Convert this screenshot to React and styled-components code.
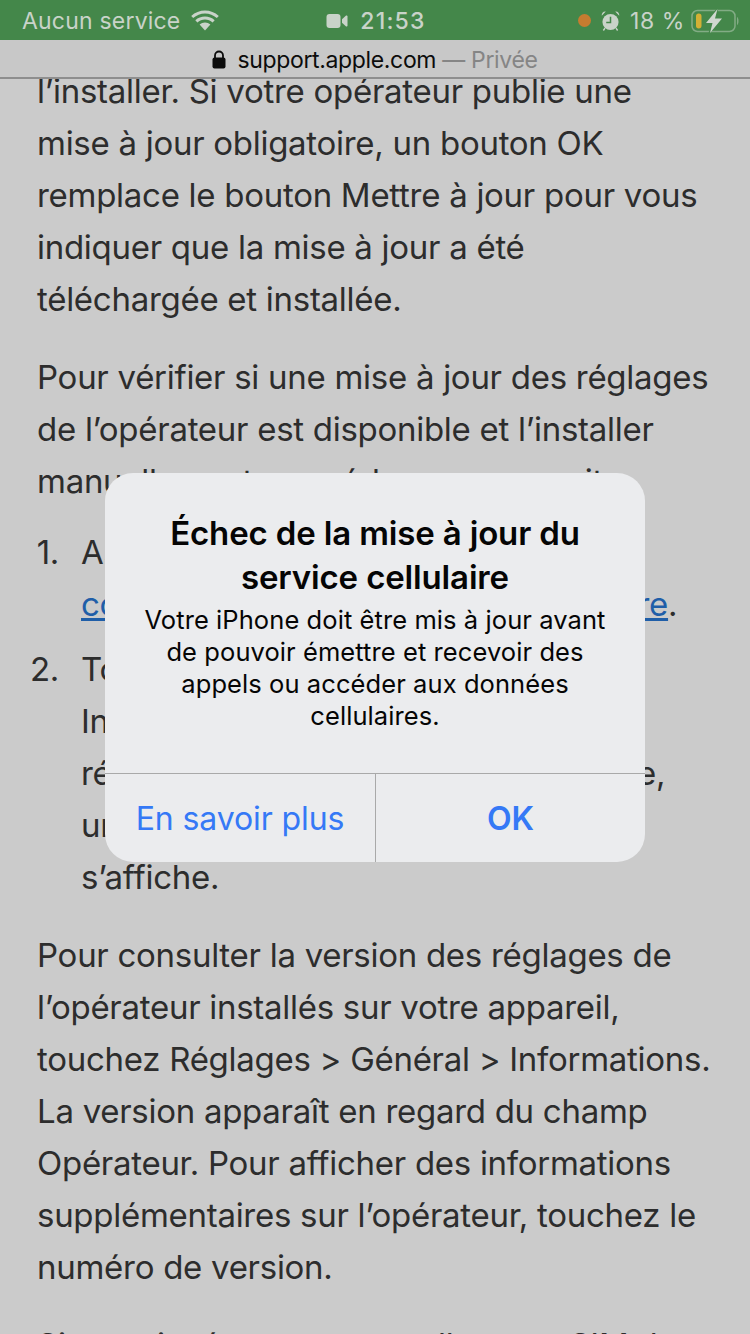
import React from 'react';
import styled, { createGlobalStyle } from 'styled-components';

const GlobalStyle = createGlobalStyle`
  html, body { margin: 0; padding: 0; background: #cbcbcb; }
  * { box-sizing: border-box; }
`;

const Phone = styled.div`
  position: relative;
  width: 750px;
  height: 1334px;
  overflow: hidden;
  display: flex;
  flex-direction: column;
  background: #cbcbcb;
  font-family: Inter, "Liberation Sans", sans-serif;
`;

const StatusBar = styled.div`
  height: 40px;
  flex: none;
  display: grid;
  grid-template-columns: 1fr auto 1fr;
  align-items: center;
  padding: 1px 20px 0 22px;
  background: #44874a;
  color: #c9d3c9;
  font-size: 23px;
  letter-spacing: 0.2px;
`;

const StatusSide = styled.div`
  display: flex;
  align-items: center;
  gap: ${({ $gap }) => $gap || '8px'};
  justify-content: ${({ $end }) => ($end ? 'flex-end' : 'flex-start')};
  margin-right: ${({ $end }) => ($end ? '-9px' : '0')};
`;

const Clock = styled.span`
  font-weight: 500;
  letter-spacing: 1.2px;
`;

const RecordDot = styled.span`
  width: 13px;
  height: 13px;
  border-radius: 50%;
  background: #c67c30;
`;

const Percent = styled.span`
  margin-right: -4px;
  letter-spacing: 0.6px;
`;

const AddressBar = styled.div`
  height: 39px;
  flex: none;
  position: relative;
  z-index: 1;
  display: flex;
  align-items: center;
  justify-content: center;
  gap: 11px;
  padding-top: 2px;
  background: #c8c8c8;
  border-bottom: 2px solid #8e8e8e;
  font-size: 23px;
  letter-spacing: -0.35px;
  color: #0c0c0c;
`;

const Private = styled.span`
  color: #858585;
`;

const Article = styled.main`
  flex: 1;
  overflow: hidden;
  margin-top: -14px;
  padding: 0 37px;
  color: #2d2d2d;
  font-size: 33px;
  line-height: 52px;
  letter-spacing: -0.28px;
`;

const Para = styled.p`
  margin: 0 0 ${({ $gap }) => $gap || '26px'};
  white-space: nowrap;
`;

const Steps = styled.ol`
  margin: 0 0 26px -9px;
  padding: 0;
  list-style: none;
  white-space: nowrap;
`;

const Step = styled.li`
  display: flex;
  & + & { margin-top: 13px; }
`;

const StepNum = styled.span`
  width: 53px;
  flex: none;
  padding-right: 22px;
  text-align: right;
`;

const TextLink = styled.a`
  color: #1f5ea8;
  text-decoration: underline;
`;

const Dialog = styled.div`
  position: absolute;
  left: 105px;
  top: 473px;
  width: 540px;
  height: 389px;
  border-radius: 28px;
  overflow: hidden;
  display: flex;
  flex-direction: column;
  background: #ebecee;
  text-align: center;
`;

const DialogBody = styled.div`
  flex: 1;
  padding: 38px 24px 0;
  color: #050505;
`;

const DialogTitle = styled.h2`
  margin: 0 0 5px;
  font-size: 33px;
  line-height: 44px;
  font-weight: 600;
  letter-spacing: -0.15px;
`;

const DialogText = styled.p`
  margin: 0;
  font-size: 25.5px;
  line-height: 32px;
  letter-spacing: 0.08px;
`;

const DialogActions = styled.div`
  height: 89px;
  flex: none;
  display: grid;
  grid-template-columns: 270px 270px;
  border-top: 1px solid #a9a9a9;
`;

const DialogButton = styled.button`
  border: 0;
  padding: 0;
  background: none;
  font-family: inherit;
  font-size: 32px;
  letter-spacing: -0.1px;
  font-weight: ${({ $primary }) => ($primary ? 600 : 400)};
  color: #3579f6;
  & + & { border-left: 1px solid #a9a9a9; }
`;

const WifiIcon = () => (
  <svg width="30" height="22" viewBox="0 0 30 22" fill="#c9d3c9">
    <path d="M15 3.500c4.400 0 8.600 1.700 11.800 4.600l2-2.200C25 2.400 20.100.5 15 .5S5 2.400 1.200 5.900l2 2.200C6.400 5.200 10.600 3.500 15 3.500z" />
    <path d="M15 9.500c2.800 0 5.500 1 7.600 2.900l2.100-2.200C22 7.800 18.600 6.500 15 6.500s-7 1.300-9.700 3.700l2.100 2.200c2.100-1.900 4.800-2.900 7.600-2.900z" />
    <path d="M15 12.500c-2 0-3.900.7-5.400 2L15 20.500l5.400-6c-1.500-1.300-3.400-2-5.400-2z" />
  </svg>
);

const CameraIcon = () => (
  <svg width="22" height="16" viewBox="0 0 21 16" fill="#c9d3c9">
    <rect x="0" y="1" width="14" height="14" rx="3" />
    <path d="M15.500 6.200 19.300 2.800c.6-.5 1.700-.2 1.700.8v8.800c0 1-1.100 1.300-1.700.8l-3.800-3.400z" />
  </svg>
);

const AlarmIcon = () => (
  <svg width="19" height="22" viewBox="0 0 20 22">
    <circle cx="10" cy="12" r="8.500" fill="#c9d3c9" />
    <path d="M10 6.500V12.500H5.500" fill="none" stroke="#44874a" strokeWidth="1.600" />
    <path d="M.8 5.500C.4 2.800 2.500.6 5 1zM19.200 5.500C19.600 2.800 17.500.6 15 1z" fill="#c9d3c9" />
    <path d="M4.200 18.500 2.500 21M15.800 18.500 17.500 21" stroke="#c9d3c9" strokeWidth="1.500" />
  </svg>
);

const BatteryIcon = () => (
  <svg width="48" height="24" viewBox="0 0 48 24">
    <rect x="1" y="1.500" width="43" height="21" rx="5.500" fill="none" stroke="#82ac85" strokeWidth="1.500" />
    <path d="M46 8c1 .5 1.500 2 1.500 4s-.5 3.500-1.500 4z" fill="#82ac85" />
    <rect x="5" y="4.500" width="5.500" height="15" rx="2.700" fill="#d3b035" />
    <path d="M27 -2 13 15h7l-3 11 16-18h-7z" fill="#44874a" />
    <path d="M26.500 0 15 14h6.500L19 24 31 9.500h-7z" fill="#cfd8cf" />
  </svg>
);

const LockIcon = () => (
  <svg width="14" height="19" viewBox="0 0 14 19" fill="#0c0c0c">
    <path d="M3 8V5.500a4 4 0 0 1 8 0V8" fill="none" stroke="#0c0c0c" strokeWidth="1.800" />
    <rect x="0.500" y="7.500" width="13" height="11" rx="2" />
  </svg>
);

export default function App() {
  return (
    <Phone>
      <GlobalStyle />
      <StatusBar>
        <StatusSide $gap="10px">
          Aucun service
          <WifiIcon />
        </StatusSide>
        <StatusSide $gap="12px">
          <CameraIcon />
          <Clock>21:53</Clock>
        </StatusSide>
        <StatusSide $end $gap="10px">
          <RecordDot />
          <AlarmIcon />
          <Percent>18 %</Percent>
          <BatteryIcon />
        </StatusSide>
      </StatusBar>
      <AddressBar>
        <LockIcon />
        <span>
          support.apple.com <Private>— Privée</Private>
        </span>
      </AddressBar>
      <Article>
        <Para>
          l’installer. Si votre opérateur publie une<br />
          mise à jour obligatoire, un bouton OK<br />
          remplace le bouton Mettre à jour pour vous<br />
          indiquer que la mise à jour a été<br />
          téléchargée et installée.
        </Para>
        <Para $gap="19px">
          Pour vérifier si une mise à jour des réglages<br />
          de l’opérateur est disponible et l’installer<br />
          manuellement, procédez comme suit :
        </Para>
        <Steps>
          <Step>
            <StepNum>1.</StepNum>
            <span>
              Assurez-vous que votre appareil est<br />
              <TextLink>connecté au réseau Wi-Fi ou cellulaire</TextLink>.
            </span>
          </Step>
          <Step>
            <StepNum>2.</StepNum>
            <span>
              Touchez Réglages &gt; Général &gt;<br />
              Informations. Si une mise à jour des<br />
              réglages de l’opérateur est disponible,<br />
              un message vous invitant à la faire<br />
              s’affiche.
            </span>
          </Step>
        </Steps>
        <Para>
          Pour consulter la version des réglages de<br />
          l’opérateur installés sur votre appareil,<br />
          touchez Réglages &gt; Général &gt; Informations.<br />
          La version apparaît en regard du champ<br />
          Opérateur. Pour afficher des informations<br />
          supplémentaires sur l’opérateur, touchez le<br />
          numéro de version.
        </Para>
        <Para>Si vous insérez une nouvelle carte SIM dans</Para>
      </Article>
      <Dialog>
        <DialogBody>
          <DialogTitle>
            Échec de la mise à jour du<br />
            service cellulaire
          </DialogTitle>
          <DialogText>
            Votre iPhone doit être mis à jour avant<br />
            de pouvoir émettre et recevoir des<br />
            appels ou accéder aux données<br />
            cellulaires.
          </DialogText>
        </DialogBody>
        <DialogActions>
          <DialogButton>En savoir plus</DialogButton>
          <DialogButton $primary>OK</DialogButton>
        </DialogActions>
      </Dialog>
    </Phone>
  );
}
